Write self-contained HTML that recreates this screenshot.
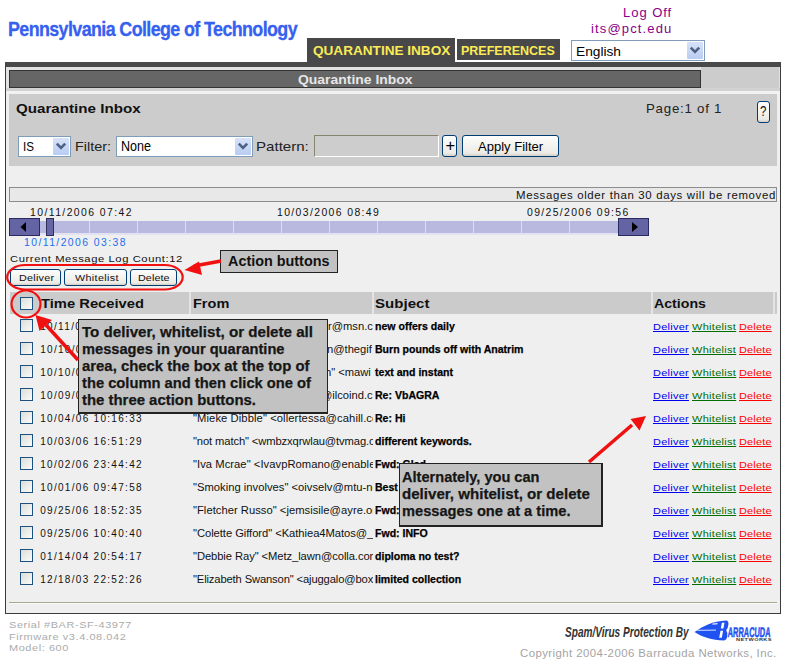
<!DOCTYPE html>
<html><head><meta charset="utf-8"><style>
html,body{margin:0;padding:0;background:#fff;width:787px;height:668px;overflow:hidden;position:relative}
.b{position:absolute}
.t{position:absolute;white-space:pre;line-height:1;font-family:"Liberation Sans",sans-serif;transform-origin:0 0}
.clipf{position:absolute;left:189px;top:316px;width:183.5px;height:285px;overflow:hidden}
</style></head><body>
<div class="b" style="left:307px;top:38px;width:148px;height:24px;background:#48484a;"></div>
<div class="b" style="left:457px;top:39px;width:103px;height:21px;background:#48484a;"></div>
<div class="b" style="left:5px;top:62px;width:776px;height:552px;background:#efefef;border:1px solid #3c3c3c;border-top:5px solid #494949;box-sizing:border-box;"></div>
<div class="b" style="left:6px;top:67px;width:774px;height:24px;background:#e2e2e2;"></div>
<div class="b" style="left:701px;top:67px;width:78px;height:24px;background:#cccccc;"></div>
<div class="b" style="left:6px;top:88px;width:774px;height:3px;background:#d2d2d2;"></div>
<div class="b" style="left:6px;top:91px;width:774px;height:3px;background:#f2f2f2;"></div>
<div class="b" style="left:9px;top:70px;width:692px;height:18px;background:#666;border:1px solid #333;box-sizing:border-box;"></div>
<div class="b" style="left:9px;top:94px;width:768px;height:72px;background:#cccccc;"></div>
<div class="b" style="left:571px;top:40px;width:134px;height:21px;background:#fff;border:1px solid #7f9db9;box-sizing:border-box;"></div><div class="b" style="left:687px;top:42px;width:16px;height:17px;background:linear-gradient(#d6e2f8,#b9cdf2);border-radius:1px;"></div><svg class="b" style="left:687px;top:42px" width="16" height="17"><path d="M3.8 5.7 L8 10.0 L12.2 5.7" stroke="#4d6185" stroke-width="2.6" fill="none"/></svg>
<div class="b" style="left:18px;top:136px;width:53px;height:21px;background:#fff;border:1px solid #7f9db9;box-sizing:border-box;"></div><div class="b" style="left:53px;top:138px;width:16px;height:17px;background:linear-gradient(#d6e2f8,#b9cdf2);border-radius:1px;"></div><svg class="b" style="left:53px;top:138px" width="16" height="17"><path d="M3.8 5.7 L8 10.0 L12.2 5.7" stroke="#4d6185" stroke-width="2.6" fill="none"/></svg>
<div class="b" style="left:116px;top:136px;width:137px;height:21px;background:#fff;border:1px solid #7f9db9;box-sizing:border-box;"></div><div class="b" style="left:235px;top:138px;width:16px;height:17px;background:linear-gradient(#d6e2f8,#b9cdf2);border-radius:1px;"></div><svg class="b" style="left:235px;top:138px" width="16" height="17"><path d="M3.8 5.7 L8 10.0 L12.2 5.7" stroke="#4d6185" stroke-width="2.6" fill="none"/></svg>
<div class="b" style="left:314px;top:135px;width:125px;height:22px;background:#cdcdcd;border:1px solid;border-color:#85856f #fff #fff #85856f;box-sizing:border-box;"></div>
<div class="b" style="left:442px;top:135px;width:15px;height:22px;background:linear-gradient(#fdfdfb,#ecebe6 85%,#d6d0c5);border:1px solid #003c74;border-radius:3px;box-sizing:border-box;"></div>
<div class="b" style="left:462px;top:135px;width:97px;height:22px;background:linear-gradient(#fdfdfb,#ecebe6 85%,#d6d0c5);border:1px solid #003c74;border-radius:3px;box-sizing:border-box;"></div>
<div class="b" style="left:757px;top:101px;width:13px;height:22px;background:linear-gradient(#fdfdfb,#ecebe6 85%,#d6d0c5);border:1px solid #003c74;border-radius:3px;box-sizing:border-box;"></div>
<div class="b" style="left:9px;top:187px;width:768px;height:15px;background:#e8e8e8;border:1px solid #8c8c8c;box-sizing:border-box;"></div>
<div class="b" style="left:40px;top:233px;width:579px;height:2px;background:#e2e2f2;"></div>
<div class="b" style="left:40px;top:221px;width:579px;height:12px;background:#b9b9e0;"></div>
<div class="b" style="left:89.0px;top:221px;width:1px;height:12px;background:#dedef2"></div>
<div class="b" style="left:137.0px;top:221px;width:1px;height:12px;background:#dedef2"></div>
<div class="b" style="left:185.1px;top:221px;width:1px;height:12px;background:#dedef2"></div>
<div class="b" style="left:233.1px;top:221px;width:1px;height:12px;background:#dedef2"></div>
<div class="b" style="left:281.1px;top:221px;width:1px;height:12px;background:#dedef2"></div>
<div class="b" style="left:329.1px;top:221px;width:1px;height:12px;background:#dedef2"></div>
<div class="b" style="left:377.2px;top:221px;width:1px;height:12px;background:#dedef2"></div>
<div class="b" style="left:425.2px;top:221px;width:1px;height:12px;background:#dedef2"></div>
<div class="b" style="left:473.2px;top:221px;width:1px;height:12px;background:#dedef2"></div>
<div class="b" style="left:521.3px;top:221px;width:1px;height:12px;background:#dedef2"></div>
<div class="b" style="left:569.3px;top:221px;width:1px;height:12px;background:#dedef2"></div>
<div class="b" style="left:9px;top:218px;width:31px;height:18px;background:#6464a4;border:1px solid #2a2a62;box-sizing:border-box;"></div>
<div class="b" style="left:618px;top:218px;width:31px;height:18px;background:#6464a4;border:1px solid #2a2a62;box-sizing:border-box;"></div>
<div class="b" style="left:46px;top:218px;width:8px;height:18px;background:#6666a6;border:1px solid #2e2e5a;box-sizing:border-box;"></div>
<svg class="b" style="left:0;top:0" width="787" height="668"><path d="M20.5 227 L26 222 L26 232 Z" fill="#000"/><path d="M638 227 L632 222 L632 232 Z" fill="#000"/></svg>
<div class="b" style="left:10px;top:269px;width:51px;height:17px;background:linear-gradient(#fdfdfb,#ecebe6 85%,#d6d0c5);border:1px solid #003c74;border-radius:3px;box-sizing:border-box;"></div>
<div class="b" style="left:64px;top:269px;width:63px;height:17px;background:linear-gradient(#fdfdfb,#ecebe6 85%,#d6d0c5);border:1px solid #003c74;border-radius:3px;box-sizing:border-box;"></div>
<div class="b" style="left:130px;top:269px;width:47px;height:17px;background:linear-gradient(#fdfdfb,#ecebe6 85%,#d6d0c5);border:1px solid #003c74;border-radius:3px;box-sizing:border-box;"></div>
<div class="b" style="left:10px;top:292px;width:767px;height:22px;background:#cbcbcb;"></div>
<div class="b" style="left:189px;top:292px;width:2px;height:22px;background:#e4e4e4;"></div>
<div class="b" style="left:372px;top:292px;width:2px;height:22px;background:#e4e4e4;"></div>
<div class="b" style="left:651px;top:292px;width:2px;height:22px;background:#e4e4e4;"></div>
<div class="b" style="left:773px;top:292px;width:2px;height:22px;background:#e4e4e4;"></div>
<div class="b" style="left:20px;top:297px;width:13px;height:13px;background:linear-gradient(135deg,#dcdcd7,#fbfbfa);border:1px solid #1c5180;box-sizing:border-box;"></div>
<div class="b" style="left:20px;top:319px;width:13px;height:13px;background:linear-gradient(135deg,#dcdcd7,#fbfbfa);border:1px solid #1c5180;box-sizing:border-box;"></div>
<div class="b" style="left:20px;top:342px;width:13px;height:13px;background:linear-gradient(135deg,#dcdcd7,#fbfbfa);border:1px solid #1c5180;box-sizing:border-box;"></div>
<div class="b" style="left:20px;top:365px;width:13px;height:13px;background:linear-gradient(135deg,#dcdcd7,#fbfbfa);border:1px solid #1c5180;box-sizing:border-box;"></div>
<div class="b" style="left:20px;top:388px;width:13px;height:13px;background:linear-gradient(135deg,#dcdcd7,#fbfbfa);border:1px solid #1c5180;box-sizing:border-box;"></div>
<div class="b" style="left:20px;top:411px;width:13px;height:13px;background:linear-gradient(135deg,#dcdcd7,#fbfbfa);border:1px solid #1c5180;box-sizing:border-box;"></div>
<div class="b" style="left:20px;top:434px;width:13px;height:13px;background:linear-gradient(135deg,#dcdcd7,#fbfbfa);border:1px solid #1c5180;box-sizing:border-box;"></div>
<div class="b" style="left:20px;top:457px;width:13px;height:13px;background:linear-gradient(135deg,#dcdcd7,#fbfbfa);border:1px solid #1c5180;box-sizing:border-box;"></div>
<div class="b" style="left:20px;top:480px;width:13px;height:13px;background:linear-gradient(135deg,#dcdcd7,#fbfbfa);border:1px solid #1c5180;box-sizing:border-box;"></div>
<div class="b" style="left:20px;top:503px;width:13px;height:13px;background:linear-gradient(135deg,#dcdcd7,#fbfbfa);border:1px solid #1c5180;box-sizing:border-box;"></div>
<div class="b" style="left:20px;top:526px;width:13px;height:13px;background:linear-gradient(135deg,#dcdcd7,#fbfbfa);border:1px solid #1c5180;box-sizing:border-box;"></div>
<div class="b" style="left:20px;top:549px;width:13px;height:13px;background:linear-gradient(135deg,#dcdcd7,#fbfbfa);border:1px solid #1c5180;box-sizing:border-box;"></div>
<div class="b" style="left:20px;top:572px;width:13px;height:13px;background:linear-gradient(135deg,#dcdcd7,#fbfbfa);border:1px solid #1c5180;box-sizing:border-box;"></div>
<div class="b" style="left:9px;top:602px;width:768px;height:1px;background:#a8a890;"></div>
<div class="b" style="left:9px;top:603px;width:768px;height:1px;background:#fafafa;"></div>
<div class="t" style="left:8.40px;top:18.78px;font-size:20.5px;font-weight:bold;color:#3560f0;transform:scaleX(0.8725);letter-spacing:-0.7px;-webkit-text-stroke:0.3px #3560f0;">Pennsylvania College of Technology</div>
<div class="t" style="left:623.20px;top:7.12px;font-size:12.8px;font-weight:normal;color:#880088;transform:scaleX(1.0200);letter-spacing:0.917px;">Log Off</div>
<div class="t" style="left:591.20px;top:22.62px;font-size:12.8px;font-weight:normal;color:#880088;transform:scaleX(1.0200);letter-spacing:1.096px;">its@pct.edu</div>
<div class="t" style="left:312.70px;top:43.75px;font-size:13px;font-weight:bold;color:#fbeb55;transform:scaleX(1.0445);">QUARANTINE INBOX</div>
<div class="t" style="left:461.00px;top:43.75px;font-size:13px;font-weight:bold;color:#fbeb55;transform:scaleX(0.9617);">PREFERENCES</div>
<div class="t" style="left:576.00px;top:44.52px;font-size:13.5px;font-weight:normal;color:#000;transform:scaleX(1.0162);">English</div>
<div class="t" style="left:297.90px;top:72.83px;font-size:13.5px;font-weight:bold;color:#e6e6e6;transform:scaleX(1.0323);">Quarantine Inbox</div>
<div class="t" style="left:16.20px;top:101.75px;font-size:13px;font-weight:bold;color:#111;transform:scaleX(1.1655);">Quarantine Inbox</div>
<div class="t" style="left:646.30px;top:102.52px;font-size:12.8px;font-weight:normal;color:#222;transform:scaleX(1.0400);letter-spacing:0.713px;">Page:1 of 1</div>
<div class="t" style="left:23.30px;top:139.95px;font-size:13px;font-weight:normal;color:#000;transform:scaleX(0.8945);">IS</div>
<div class="t" style="left:74.70px;top:139.95px;font-size:13px;font-weight:normal;color:#222;transform:scaleX(1.1077);">Filter:</div>
<div class="t" style="left:120.80px;top:139.10px;font-size:14px;font-weight:normal;color:#000;transform:scaleX(0.8964);">None</div>
<div class="t" style="left:256.20px;top:139.95px;font-size:13px;font-weight:normal;color:#222;transform:scaleX(1.1596);">Pattern:</div>
<div class="t" style="left:445.50px;top:136.88px;font-size:16.5px;font-weight:normal;color:#000;">+</div>
<div class="t" style="left:760.20px;top:104.30px;font-size:14px;font-weight:normal;color:#111;transform:scaleX(0.8208);">?</div>
<div class="t" style="left:477.70px;top:139.95px;font-size:13px;font-weight:normal;color:#000;transform:scaleX(1.0026);">Apply Filter</div>
<div class="t" style="left:516.00px;top:190.93px;font-size:10.2px;font-weight:normal;color:#111;transform:scaleX(1.1200);letter-spacing:0.591px;">Messages older than 30 days will be removed</div>
<div class="t" style="left:29.70px;top:207.70px;font-size:10px;font-weight:normal;color:#111;transform:scaleX(1.0400);letter-spacing:1.366px;">10/11/2006 07:42</div>
<div class="t" style="left:277.40px;top:207.70px;font-size:10px;font-weight:normal;color:#111;transform:scaleX(1.0400);letter-spacing:1.335px;">10/03/2006 08:49</div>
<div class="t" style="left:526.90px;top:207.70px;font-size:10px;font-weight:normal;color:#111;transform:scaleX(1.0400);letter-spacing:1.303px;">09/25/2006 09:56</div>
<div class="t" style="left:23.60px;top:237.80px;font-size:10px;font-weight:normal;color:#1e6ef0;transform:scaleX(1.0400);letter-spacing:1.366px;">10/11/2006 03:38</div>
<div class="t" style="left:10.20px;top:253.82px;font-size:9.5px;font-weight:normal;color:#111;transform:scaleX(1.1800);letter-spacing:0.498px;">Current Message Log Count:12</div>
<div class="t" style="left:18.70px;top:273.14px;font-size:9.6px;font-weight:normal;color:#111;transform:scaleX(1.1200);letter-spacing:0.232px;">Deliver</div>
<div class="t" style="left:74.80px;top:273.14px;font-size:9.6px;font-weight:normal;color:#111;transform:scaleX(1.1200);letter-spacing:0.312px;">Whitelist</div>
<div class="t" style="left:137.70px;top:273.14px;font-size:9.6px;font-weight:normal;color:#111;transform:scaleX(1.1200);letter-spacing:0.078px;">Delete</div>
<div class="t" style="left:40.70px;top:296.52px;font-size:13.5px;font-weight:bold;color:#111;transform:scaleX(1.0921);">Time Received</div>
<div class="t" style="left:192.60px;top:296.52px;font-size:13.5px;font-weight:bold;color:#111;transform:scaleX(1.0756);">From</div>
<div class="t" style="left:375.30px;top:296.52px;font-size:13.5px;font-weight:bold;color:#111;transform:scaleX(1.1155);">Subject</div>
<div class="t" style="left:654.00px;top:296.52px;font-size:13.5px;font-weight:bold;color:#111;transform:scaleX(1.0502);">Actions</div>
<div class="t" style="left:40.20px;top:321.70px;font-size:10px;font-weight:normal;color:#111;letter-spacing:1.344px;">10/11/06 07:42:10</div>
<div class="t" style="left:653.30px;top:321.93px;font-size:9.5px;font-weight:normal;color:#0000f0;transform:scaleX(1.1500);letter-spacing:0.247px;text-decoration:underline;">Deliver</div>
<div class="t" style="left:692.10px;top:321.93px;font-size:9.5px;font-weight:normal;color:#006e00;transform:scaleX(1.1500);letter-spacing:0.283px;text-decoration:underline;">Whitelist</div>
<div class="t" style="left:739.20px;top:321.93px;font-size:9.5px;font-weight:normal;color:#ff0000;transform:scaleX(1.1500);letter-spacing:0.158px;text-decoration:underline;">Delete</div>
<div class="t" style="left:40.20px;top:344.70px;font-size:10px;font-weight:normal;color:#111;letter-spacing:1.297px;">10/10/06 22:13:44</div>
<div class="t" style="left:653.30px;top:344.93px;font-size:9.5px;font-weight:normal;color:#0000f0;transform:scaleX(1.1500);letter-spacing:0.247px;text-decoration:underline;">Deliver</div>
<div class="t" style="left:692.10px;top:344.93px;font-size:9.5px;font-weight:normal;color:#006e00;transform:scaleX(1.1500);letter-spacing:0.283px;text-decoration:underline;">Whitelist</div>
<div class="t" style="left:739.20px;top:344.93px;font-size:9.5px;font-weight:normal;color:#ff0000;transform:scaleX(1.1500);letter-spacing:0.158px;text-decoration:underline;">Delete</div>
<div class="t" style="left:40.20px;top:367.70px;font-size:10px;font-weight:normal;color:#111;letter-spacing:1.297px;">10/10/06 13:20:51</div>
<div class="t" style="left:653.30px;top:367.93px;font-size:9.5px;font-weight:normal;color:#0000f0;transform:scaleX(1.1500);letter-spacing:0.247px;text-decoration:underline;">Deliver</div>
<div class="t" style="left:692.10px;top:367.93px;font-size:9.5px;font-weight:normal;color:#006e00;transform:scaleX(1.1500);letter-spacing:0.283px;text-decoration:underline;">Whitelist</div>
<div class="t" style="left:739.20px;top:367.93px;font-size:9.5px;font-weight:normal;color:#ff0000;transform:scaleX(1.1500);letter-spacing:0.158px;text-decoration:underline;">Delete</div>
<div class="t" style="left:40.20px;top:390.70px;font-size:10px;font-weight:normal;color:#111;letter-spacing:1.297px;">10/09/06 05:31:02</div>
<div class="t" style="left:653.30px;top:390.93px;font-size:9.5px;font-weight:normal;color:#0000f0;transform:scaleX(1.1500);letter-spacing:0.247px;text-decoration:underline;">Deliver</div>
<div class="t" style="left:692.10px;top:390.93px;font-size:9.5px;font-weight:normal;color:#006e00;transform:scaleX(1.1500);letter-spacing:0.283px;text-decoration:underline;">Whitelist</div>
<div class="t" style="left:739.20px;top:390.93px;font-size:9.5px;font-weight:normal;color:#ff0000;transform:scaleX(1.1500);letter-spacing:0.158px;text-decoration:underline;">Delete</div>
<div class="t" style="left:40.20px;top:413.70px;font-size:10px;font-weight:normal;color:#111;letter-spacing:1.297px;">10/04/06 10:16:33</div>
<div class="t" style="left:653.30px;top:413.93px;font-size:9.5px;font-weight:normal;color:#0000f0;transform:scaleX(1.1500);letter-spacing:0.247px;text-decoration:underline;">Deliver</div>
<div class="t" style="left:692.10px;top:413.93px;font-size:9.5px;font-weight:normal;color:#006e00;transform:scaleX(1.1500);letter-spacing:0.283px;text-decoration:underline;">Whitelist</div>
<div class="t" style="left:739.20px;top:413.93px;font-size:9.5px;font-weight:normal;color:#ff0000;transform:scaleX(1.1500);letter-spacing:0.158px;text-decoration:underline;">Delete</div>
<div class="t" style="left:40.20px;top:436.70px;font-size:10px;font-weight:normal;color:#111;letter-spacing:1.297px;">10/03/06 16:51:29</div>
<div class="t" style="left:653.30px;top:436.93px;font-size:9.5px;font-weight:normal;color:#0000f0;transform:scaleX(1.1500);letter-spacing:0.247px;text-decoration:underline;">Deliver</div>
<div class="t" style="left:692.10px;top:436.93px;font-size:9.5px;font-weight:normal;color:#006e00;transform:scaleX(1.1500);letter-spacing:0.283px;text-decoration:underline;">Whitelist</div>
<div class="t" style="left:739.20px;top:436.93px;font-size:9.5px;font-weight:normal;color:#ff0000;transform:scaleX(1.1500);letter-spacing:0.158px;text-decoration:underline;">Delete</div>
<div class="t" style="left:40.20px;top:459.70px;font-size:10px;font-weight:normal;color:#111;letter-spacing:1.297px;">10/02/06 23:44:42</div>
<div class="t" style="left:653.30px;top:459.93px;font-size:9.5px;font-weight:normal;color:#0000f0;transform:scaleX(1.1500);letter-spacing:0.247px;text-decoration:underline;">Deliver</div>
<div class="t" style="left:692.10px;top:459.93px;font-size:9.5px;font-weight:normal;color:#006e00;transform:scaleX(1.1500);letter-spacing:0.283px;text-decoration:underline;">Whitelist</div>
<div class="t" style="left:739.20px;top:459.93px;font-size:9.5px;font-weight:normal;color:#ff0000;transform:scaleX(1.1500);letter-spacing:0.158px;text-decoration:underline;">Delete</div>
<div class="t" style="left:40.20px;top:482.70px;font-size:10px;font-weight:normal;color:#111;letter-spacing:1.297px;">10/01/06 09:47:58</div>
<div class="t" style="left:653.30px;top:482.93px;font-size:9.5px;font-weight:normal;color:#0000f0;transform:scaleX(1.1500);letter-spacing:0.247px;text-decoration:underline;">Deliver</div>
<div class="t" style="left:692.10px;top:482.93px;font-size:9.5px;font-weight:normal;color:#006e00;transform:scaleX(1.1500);letter-spacing:0.283px;text-decoration:underline;">Whitelist</div>
<div class="t" style="left:739.20px;top:482.93px;font-size:9.5px;font-weight:normal;color:#ff0000;transform:scaleX(1.1500);letter-spacing:0.158px;text-decoration:underline;">Delete</div>
<div class="t" style="left:40.20px;top:505.70px;font-size:10px;font-weight:normal;color:#111;letter-spacing:1.297px;">09/25/06 18:52:35</div>
<div class="t" style="left:653.30px;top:505.93px;font-size:9.5px;font-weight:normal;color:#0000f0;transform:scaleX(1.1500);letter-spacing:0.247px;text-decoration:underline;">Deliver</div>
<div class="t" style="left:692.10px;top:505.93px;font-size:9.5px;font-weight:normal;color:#006e00;transform:scaleX(1.1500);letter-spacing:0.283px;text-decoration:underline;">Whitelist</div>
<div class="t" style="left:739.20px;top:505.93px;font-size:9.5px;font-weight:normal;color:#ff0000;transform:scaleX(1.1500);letter-spacing:0.158px;text-decoration:underline;">Delete</div>
<div class="t" style="left:40.20px;top:528.70px;font-size:10px;font-weight:normal;color:#111;letter-spacing:1.297px;">09/25/06 10:40:40</div>
<div class="t" style="left:653.30px;top:528.92px;font-size:9.5px;font-weight:normal;color:#0000f0;transform:scaleX(1.1500);letter-spacing:0.247px;text-decoration:underline;">Deliver</div>
<div class="t" style="left:692.10px;top:528.92px;font-size:9.5px;font-weight:normal;color:#006e00;transform:scaleX(1.1500);letter-spacing:0.283px;text-decoration:underline;">Whitelist</div>
<div class="t" style="left:739.20px;top:528.92px;font-size:9.5px;font-weight:normal;color:#ff0000;transform:scaleX(1.1500);letter-spacing:0.158px;text-decoration:underline;">Delete</div>
<div class="t" style="left:40.20px;top:551.70px;font-size:10px;font-weight:normal;color:#111;letter-spacing:1.297px;">01/14/04 20:54:17</div>
<div class="t" style="left:653.30px;top:551.92px;font-size:9.5px;font-weight:normal;color:#0000f0;transform:scaleX(1.1500);letter-spacing:0.247px;text-decoration:underline;">Deliver</div>
<div class="t" style="left:692.10px;top:551.92px;font-size:9.5px;font-weight:normal;color:#006e00;transform:scaleX(1.1500);letter-spacing:0.283px;text-decoration:underline;">Whitelist</div>
<div class="t" style="left:739.20px;top:551.92px;font-size:9.5px;font-weight:normal;color:#ff0000;transform:scaleX(1.1500);letter-spacing:0.158px;text-decoration:underline;">Delete</div>
<div class="t" style="left:40.20px;top:574.70px;font-size:10px;font-weight:normal;color:#111;letter-spacing:1.297px;">12/18/03 22:52:26</div>
<div class="t" style="left:653.30px;top:574.92px;font-size:9.5px;font-weight:normal;color:#0000f0;transform:scaleX(1.1500);letter-spacing:0.247px;text-decoration:underline;">Deliver</div>
<div class="t" style="left:692.10px;top:574.92px;font-size:9.5px;font-weight:normal;color:#006e00;transform:scaleX(1.1500);letter-spacing:0.283px;text-decoration:underline;">Whitelist</div>
<div class="t" style="left:739.20px;top:574.92px;font-size:9.5px;font-weight:normal;color:#ff0000;transform:scaleX(1.1500);letter-spacing:0.158px;text-decoration:underline;">Delete</div>
<div class="t" style="left:8.50px;top:620.07px;font-size:9.8px;font-weight:normal;color:#acacac;transform:scaleX(1.1200);letter-spacing:0.502px;">Serial #BAR-SF-43977</div>
<div class="t" style="left:8.50px;top:631.67px;font-size:9.8px;font-weight:normal;color:#acacac;transform:scaleX(1.1200);letter-spacing:0.502px;">Firmware v3.4.08.042</div>
<div class="t" style="left:8.50px;top:643.27px;font-size:9.8px;font-weight:normal;color:#acacac;transform:scaleX(1.1200);letter-spacing:0.502px;">Model: 600</div>
<div class="t" style="left:565.00px;top:624.05px;font-size:15px;font-weight:bold;color:#333;transform:scaleX(0.6730);font-style:italic;">Spam/Virus Protection By</div>
<div class="t" style="left:519.60px;top:648.73px;font-size:10.2px;font-weight:normal;color:#a4a4a4;transform:scaleX(1.1200);letter-spacing:0.383px;">Copyright 2004-2006 Barracuda Networks, Inc.</div>
<div class="t" style="left:374.60px;top:320.83px;font-size:11.5px;font-weight:bold;color:#000;transform:scaleX(0.9176);-webkit-text-stroke:0.25px #000;">new offers daily</div>
<div class="t" style="left:374.60px;top:343.83px;font-size:11.5px;font-weight:bold;color:#000;transform:scaleX(0.9176);-webkit-text-stroke:0.25px #000;">Burn pounds off with Anatrim</div>
<div class="t" style="left:374.60px;top:366.83px;font-size:11.5px;font-weight:bold;color:#000;transform:scaleX(0.9176);-webkit-text-stroke:0.25px #000;">text and instant</div>
<div class="t" style="left:374.60px;top:389.83px;font-size:11.5px;font-weight:bold;color:#000;transform:scaleX(0.9176);-webkit-text-stroke:0.25px #000;">Re: VbAGRA</div>
<div class="t" style="left:374.60px;top:412.83px;font-size:11.5px;font-weight:bold;color:#000;transform:scaleX(0.9176);-webkit-text-stroke:0.25px #000;">Re: Hi</div>
<div class="t" style="left:374.60px;top:435.83px;font-size:11.5px;font-weight:bold;color:#000;transform:scaleX(0.9176);-webkit-text-stroke:0.25px #000;">different keywords.</div>
<div class="t" style="left:374.60px;top:458.83px;font-size:11.5px;font-weight:bold;color:#000;transform:scaleX(0.9176);-webkit-text-stroke:0.25px #000;">Fwd: Glad</div>
<div class="t" style="left:374.60px;top:481.83px;font-size:11.5px;font-weight:bold;color:#000;transform:scaleX(0.9176);-webkit-text-stroke:0.25px #000;">Best prices</div>
<div class="t" style="left:374.60px;top:504.83px;font-size:11.5px;font-weight:bold;color:#000;transform:scaleX(0.9176);-webkit-text-stroke:0.25px #000;">Fwd: Hey</div>
<div class="t" style="left:374.60px;top:527.83px;font-size:11.5px;font-weight:bold;color:#000;transform:scaleX(0.9176);-webkit-text-stroke:0.25px #000;">Fwd: INFO</div>
<div class="t" style="left:374.60px;top:550.83px;font-size:11.5px;font-weight:bold;color:#000;transform:scaleX(0.9176);-webkit-text-stroke:0.25px #000;">diploma no test?</div>
<div class="t" style="left:374.60px;top:573.83px;font-size:11.5px;font-weight:bold;color:#000;transform:scaleX(0.9176);-webkit-text-stroke:0.25px #000;">limited collection</div>
<div class="clipf"><div class="t" style="left:138.97px;top:5.50px;font-size:10px;font-weight:normal;color:#111;transform:scaleX(1.1200);letter-spacing:-0.022px;">r@msn.c</div><div class="t" style="left:137.96px;top:28.50px;font-size:10px;font-weight:normal;color:#111;transform:scaleX(1.1200);letter-spacing:-0.022px;">n@thegif</div><div class="t" style="left:135.66px;top:51.50px;font-size:10px;font-weight:normal;color:#111;transform:scaleX(1.1200);letter-spacing:-0.022px;">h&quot; &lt;mawi</div><div class="t" style="left:131.58px;top:74.50px;font-size:10px;font-weight:normal;color:#111;transform:scaleX(1.1200);letter-spacing:-0.022px;">@ilcoind.c</div><div class="t" style="left:4.20px;top:97.50px;font-size:10px;font-weight:normal;color:#111;transform:scaleX(1.1200);letter-spacing:0.080px;">&quot;Mieke Dibble&quot; &lt;ollertessa@cahill.com&gt;</div><div class="t" style="left:4.20px;top:120.50px;font-size:10px;font-weight:normal;color:#111;transform:scaleX(1.1200);letter-spacing:-0.103px;">&quot;not match&quot; &lt;wmbzxqrwlau@tvmag.com&gt;</div><div class="t" style="left:4.20px;top:143.50px;font-size:10px;font-weight:normal;color:#111;transform:scaleX(1.1200);letter-spacing:0.044px;">&quot;Iva Mcrae&quot; &lt;IvavpRomano@enable.com&gt;</div><div class="t" style="left:4.20px;top:166.50px;font-size:10px;font-weight:normal;color:#111;transform:scaleX(1.1200);letter-spacing:0.015px;">&quot;Smoking involves&quot; &lt;oivselv@mtu-net.ru&gt;</div><div class="t" style="left:4.20px;top:189.50px;font-size:10px;font-weight:normal;color:#111;transform:scaleX(1.1200);letter-spacing:0.025px;">&quot;Fletcher Russo&quot; &lt;jemsisile@ayre.org&gt;</div><div class="t" style="left:4.20px;top:212.50px;font-size:10px;font-weight:normal;color:#111;transform:scaleX(1.1200);letter-spacing:-0.044px;">&quot;Colette Gifford&quot; &lt;Kathiea4Matos@_mail.com&gt;</div><div class="t" style="left:4.20px;top:235.50px;font-size:10px;font-weight:normal;color:#111;transform:scaleX(1.1200);letter-spacing:-0.068px;">&quot;Debbie Ray&quot; &lt;Metz_lawn@colla.com&gt;</div><div class="t" style="left:4.20px;top:258.50px;font-size:10px;font-weight:normal;color:#111;transform:scaleX(1.1200);letter-spacing:-0.123px;">&quot;Elizabeth Swanson&quot; &lt;ajuggalo@box.com&gt;</div></div>
<div class="b" style="left:78px;top:319px;width:250px;height:95px;background:#c2c2c2;border:1px solid #222;border-bottom-width:2px;box-sizing:border-box;"></div>
<div class="b" style="left:399px;top:463px;width:204px;height:64px;background:#c2c2c2;border:1px solid #222;border-bottom-width:2px;border-right-width:2px;box-sizing:border-box;"></div>
<div class="b" style="left:220px;top:250px;width:118px;height:23px;background:#c2c2c2;border:1px solid #222;box-sizing:border-box;"></div>
<div class="t" style="left:228.00px;top:252.75px;font-size:15px;font-weight:bold;color:#111;transform:scaleX(0.9591);">Action buttons</div>
<div class="t" style="left:81.50px;top:324.05px;font-size:15px;font-weight:bold;color:#161616;transform:scaleX(1.0089);-webkit-text-stroke:0.25px #161616;">To deliver, whitelist, or delete all</div>
<div class="t" style="left:81.50px;top:341.15px;font-size:15px;font-weight:bold;color:#161616;transform:scaleX(0.9755);-webkit-text-stroke:0.25px #161616;">messages in your quarantine</div>
<div class="t" style="left:81.50px;top:358.25px;font-size:15px;font-weight:bold;color:#161616;transform:scaleX(0.9925);-webkit-text-stroke:0.25px #161616;">area, check the box at the top of</div>
<div class="t" style="left:81.50px;top:375.35px;font-size:15px;font-weight:bold;color:#161616;transform:scaleX(0.9813);-webkit-text-stroke:0.25px #161616;">the column and then click one of</div>
<div class="t" style="left:81.50px;top:392.45px;font-size:15px;font-weight:bold;color:#161616;transform:scaleX(0.9942);-webkit-text-stroke:0.25px #161616;">the three action buttons.</div>
<div class="t" style="left:401.50px;top:469.25px;font-size:15px;font-weight:bold;color:#161616;transform:scaleX(0.9722);-webkit-text-stroke:0.25px #161616;">Alternately, you can</div>
<div class="t" style="left:401.50px;top:486.10px;font-size:15px;font-weight:bold;color:#161616;transform:scaleX(1.0068);-webkit-text-stroke:0.25px #161616;">deliver, whitelist, or delete</div>
<div class="t" style="left:401.50px;top:502.95px;font-size:15px;font-weight:bold;color:#161616;transform:scaleX(0.9763);-webkit-text-stroke:0.25px #161616;">messages one at a time.</div>
<svg class="b" style="left:0;top:0" width="787" height="668">
<g stroke="#f01010" fill="none" stroke-width="2.2">
<rect x="7.2" y="265" width="175.5" height="24.5" rx="18" ry="12.25"/>
<ellipse cx="26" cy="304" rx="14.5" ry="13.5"/>
</g>
<g stroke="#f01010" stroke-width="3.5" fill="none">
<line x1="46" y1="325" x2="78" y2="360"/>
<line x1="632" y1="425" x2="589" y2="462"/>
<line x1="194" y1="266" x2="221" y2="261"/>
</g>
<g fill="#f01010">
<path d="M35.5 315 L39.5 331 L52 320 Z"/>
<path d="M646 416 L630.5 419 L639.5 430.5 Z"/>
<path d="M184.5 270 L199 261.5 L202 275 Z"/>
</g>
</svg>
<svg class="b" style="left:0;top:0" width="787" height="668">
<path d="M694.5 632 C 703 626, 713 621, 726 620.4 Q 728.8 620.4 728.4 624.5 Q 728 628.6 726.2 630.3 Q 727.6 632 727.2 636 Q 726.8 640.4 724 640.4 C 712 640.2, 702 637, 694.5 632 Z" fill="#1f52f0"/>
<path d="M721.9 622.8 L724.5 622.8 L723.4 628.4 L720.8 628.4 Z M720.5 630.8 L723.1 630.8 L721.8 637.8 L719.2 637.8 Z" fill="#fff"/>
<path d="M697.5 630.3 L716 630.1" stroke="#fff" stroke-width="1" fill="none" opacity="0.85"/>
<path d="M712.5 624.2 L717.5 623.6" stroke="#fff" stroke-width="1.3" fill="none" opacity="0.9"/>
<text x="0" y="0" font-family="Liberation Sans" font-weight="bold" font-size="14" fill="#1f52f0" stroke="#1f52f0" stroke-width="0.5" transform="translate(727.5,637.3) scale(0.53,1) skewX(-6)">ARRACUDA</text>
<text x="0" y="0" font-family="Liberation Sans" font-weight="bold" font-size="4" fill="#333" transform="translate(736,641.2) scale(1.4,1)" letter-spacing="0.3">NETWORKS</text>
</svg>
</body></html>
